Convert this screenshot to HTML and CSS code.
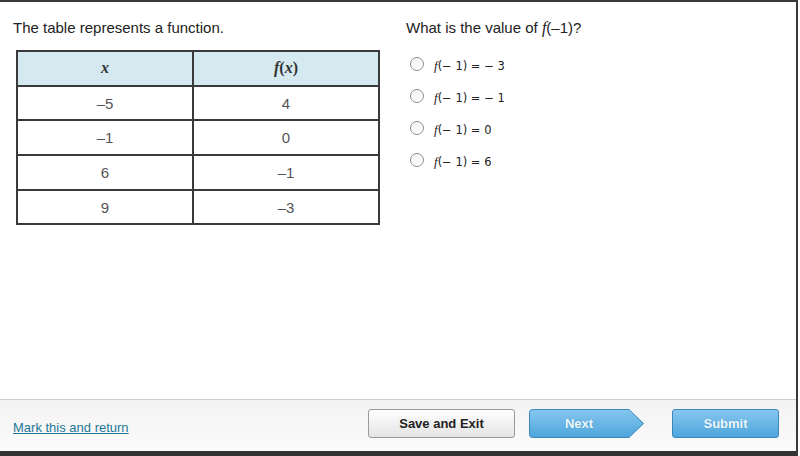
FILE: index.html
```html
<!DOCTYPE html>
<html>
<head>
<meta charset="utf-8">
<link rel="stylesheet" href="styles.css">
</head>
<body>
<div class="frame">
  <div class="main">
    <div class="col-left">
      <p class="prompt">The table represents a function.</p>
      <table class="ftable">
        <thead>
          <tr><th class="c1"><i>x</i></th><th><i>f</i>(<i>x</i>)</th></tr>
        </thead>
        <tbody>
          <tr><td>–5</td><td>4</td></tr>
          <tr><td>–1</td><td>0</td></tr>
          <tr><td>6</td><td>–1</td></tr>
          <tr><td>9</td><td>–3</td></tr>
        </tbody>
      </table>
    </div>
    <div class="col-right">
      <p class="prompt">What is the value of <i class="fi">f</i>(–1)?</p>
      <ul class="options">
        <li><span class="radio"></span><span class="opt"><i class="of">f</i>(− 1) = − 3</span></li>
        <li><span class="radio"></span><span class="opt"><i class="of">f</i>(− 1) = − 1</span></li>
        <li><span class="radio"></span><span class="opt"><i class="of">f</i>(− 1) = 0</span></li>
        <li><span class="radio"></span><span class="opt"><i class="of">f</i>(− 1) = 6</span></li>
      </ul>
    </div>
  </div>
  <div class="footer">
    <a class="mark" href="#">Mark this and return</a>
    <div class="buttons">
      <button class="btn btn-save">Save and Exit</button>
      <button class="btn-next">
        <svg class="next-shape" width="116" height="29" viewBox="0 0 116 29">
          <defs>
            <linearGradient id="bg1" x1="0" y1="0" x2="0" y2="1">
              <stop offset="0" stop-color="#86c7ef"/>
              <stop offset="1" stop-color="#4ea5dc"/>
            </linearGradient>
          </defs>
          <path d="M3.5 0.5 H100 L114.5 14.5 L100 28.5 H3.5 Q0.5 28.5 0.5 25.5 V3.5 Q0.5 0.5 3.5 0.5 Z" fill="url(#bg1)" stroke="#3b86bb" stroke-width="1"/>
        </svg>
        <span class="next-label">Next</span>
      </button>
      <button class="btn btn-submit">Submit</button>
    </div>
  </div>
  <div class="bottombar"></div>
</div>
</body>
</html>
```

FILE: styles.css
```css
html, body {
  margin: 0;
  padding: 0;
  background: #ffffff;
}
body {
  font-family: "Liberation Sans", Arial, sans-serif;
  color: #222;
}
.frame {
  width: 798px;
  height: 456px;
  box-sizing: border-box;
  border-top: 2px solid #3a3a3a;
  border-right: 2px solid #3a3a3a;
  display: flex;
  flex-direction: column;
}
.main {
  height: 398px;
  display: flex;
  padding-top: 17px;
  box-sizing: border-box;
}
.col-left {
  width: 406px;
  padding-left: 13px;
  box-sizing: border-box;
}
.col-right {
  flex: 1;
}
.prompt {
  margin: 0;
  font-size: 15px;
  line-height: 18px;
  color: #222;
}
.fi {
  font-family: "Liberation Serif", "Times New Roman", serif;
  font-size: 16px;
}
.ftable {
  margin-top: 13px;
  margin-left: 3px;
  border-collapse: collapse;
  width: 364px;
  font-size: 15px;
}
.ftable th, .ftable td {
  border: 2px solid #3a3a3a;
  text-align: center;
  height: 32.7px;
  padding: 0;
  color: #555;
}
.ftable th {
  background: #d4e9f0;
  font-family: "Liberation Serif", "Times New Roman", serif;
  font-weight: bold;
  font-size: 16px;
  color: #333;
}
.ftable th.c1 {
  width: 174px;
}
.options {
  list-style: none;
  margin: 20px 0 0 0;
  padding: 0 0 0 4px;
}
.options li {
  display: flex;
  align-items: center;
  height: 14px;
  margin-bottom: 18px;
}
.radio {
  width: 12px;
  height: 12px;
  border: 1px solid #8e8e8e;
  border-radius: 50%;
  background: linear-gradient(#f4f4f4, #ffffff);
  box-sizing: content-box;
  flex: none;
}
.opt {
  margin-left: 10px;
  font-family: "DejaVu Sans", "Liberation Sans", sans-serif;
  font-size: 11.5px;
  color: #222;
  padding-top: 3px;
}
.of {
  font-family: "Liberation Serif", serif;
  font-size: 13px;
}
.footer {
  height: 52px;
  box-sizing: border-box;
  border-top: 1px solid #cfcfcf;
  background: linear-gradient(#f3f3f3, #fbfbfb);
  display: flex;
  align-items: flex-start;
  padding: 9px 17px 0 13px;
}
.mark {
  font-size: 13px;
  color: #1d7797;
  text-decoration: underline;
  margin-top: 11px;
}
.buttons {
  margin-left: auto;
  display: flex;
  align-items: flex-start;
}
.btn {
  height: 29px;
  box-sizing: border-box;
  border-radius: 3px;
  font-family: "Liberation Sans", Arial, sans-serif;
  font-size: 13px;
  font-weight: bold;
  padding: 0;
  cursor: pointer;
}
.btn-save {
  width: 147px;
  border: 1px solid #9a9a9a;
  background: linear-gradient(#fefefe, #e4e4e4);
  color: #222;
}
.btn-next {
  position: relative;
  width: 116px;
  height: 29px;
  margin-left: 14px;
  border: none;
  background: none;
  padding: 0;
  font-family: "Liberation Sans", Arial, sans-serif;
  font-size: 13px;
  font-weight: bold;
  color: #eef7fd;
  text-shadow: 0 0 1px #4a8fbf;
}
.next-shape {
  position: absolute;
  left: 0;
  top: 0;
}
.next-label {
  position: relative;
  display: block;
  width: 100px;
  text-align: center;
}
.btn-submit {
  width: 107px;
  margin-left: 27px;
  border: 1px solid #3b86bb;
  background: linear-gradient(#86c7ef, #4ea5dc);
  color: #eef7fd;
  text-shadow: 0 0 1px #4a8fbf;
}
.bottombar {
  height: 5px;
  background: #333;
}
```
